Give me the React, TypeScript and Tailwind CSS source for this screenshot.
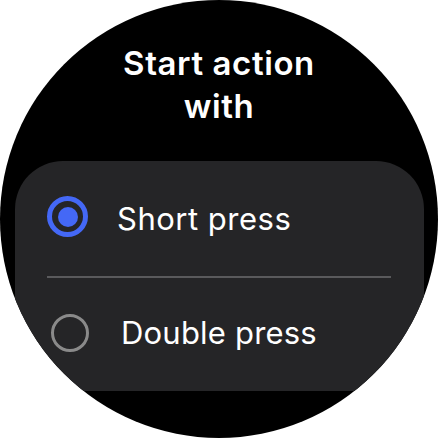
import React from "react";

const font = { fontFamily: "Inter, 'Noto Sans', sans-serif" };

export default function App() {
  return (
    <div className="w-[438px] h-[438px] bg-white" style={font}>
      <div className="w-[438px] h-[438px] rounded-full bg-black overflow-hidden flex flex-col">
        {/* Heading */}
        <div className="pt-[42px] text-center text-white font-semibold text-[33px] leading-[43px] tracking-[0.6px]">
          <div>Start action</div>
          <div>with</div>
        </div>

        {/* Option list card */}
        <div className="mt-[33px] ml-[15px] w-[409px] h-[230px] bg-[#252527] rounded-t-[48px] flex flex-col">
          <div className="h-[115px] pt-[33px] pl-[32px] flex items-start">
            <div className="flex items-center">
              <div className="w-[41px] h-[41px] rounded-full border-[5px] border-[#4468f6] flex items-center justify-center">
                <div className="w-[20px] h-[20px] rounded-full bg-[#4468f6]" />
              </div>
              <span className="ml-[29px] text-white text-[31px] leading-[40px] tracking-[0.5px] mt-[5px]">Short press</span>
            </div>
          </div>
          <div className="ml-[32px] mr-[33px] h-[2px] bg-[#5a5a5c]" />
          <div className="pt-[35px] pl-[36px] flex items-start">
            <div className="flex items-center">
              <div className="w-[38px] h-[38px] rounded-full border-[3px] border-[#8a8a8a]" />
              <span className="ml-[32px] text-white text-[31px] leading-[40px] tracking-[0.2px]">Double press</span>
            </div>
          </div>
        </div>
      </div>
    </div>
  );
}
